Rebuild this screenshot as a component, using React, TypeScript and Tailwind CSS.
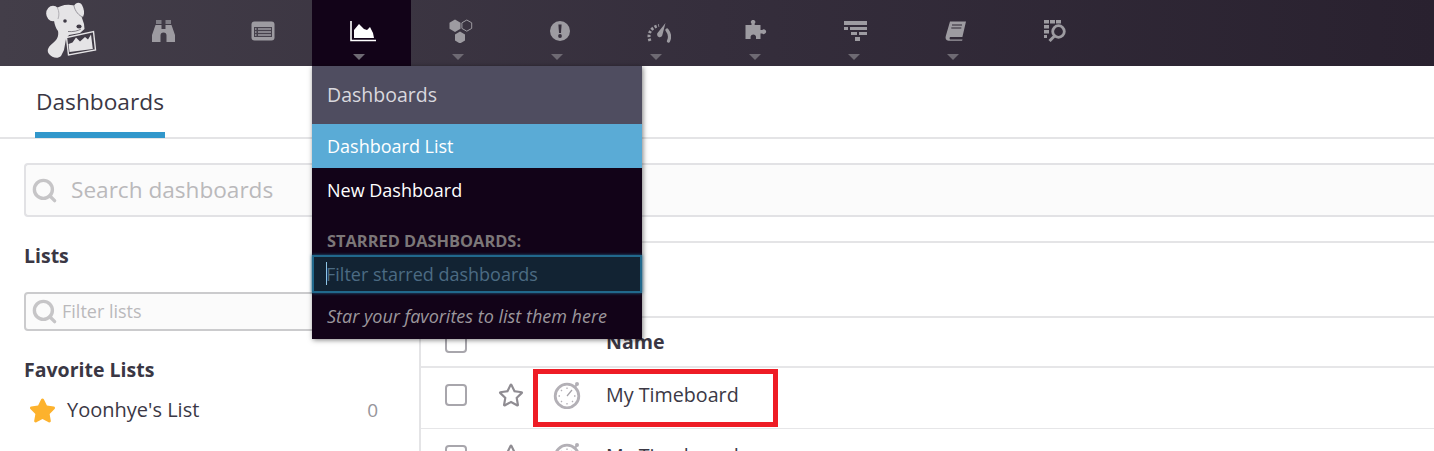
import { Search } from 'lucide-react';
import { FaStar, FaRegStar } from 'react-icons/fa';

const G = '#9d9ba1';

function DogLogo() {
    return (
        <svg width="80" height="66" viewBox="0 0 80 66" className="absolute left-[30px] top-0">
            <g fill="#e5e4e6">
                <path d="M24 10C30 5 40 3 47 7L51 15 54 24 54.500 29 50 33 39 35 36 39 34 50 31 56C28 59 22 58 19 54 16 50 19 46 23 43 27 40 29 36 28 31 24 26 23 17 24 10z" />
                <ellipse cx="23" cy="13.500" rx="6.800" ry="7.800" />
                <path d="M44 6C46 2 50 2 52 5 54 9 55 13 53 17 49 16 45 11 44 6z" />
            </g>
            <path d="M27.500 8C29 11 29.500 15 28 19" stroke="#a9a7ad" strokeWidth="0.900" fill="none" />
            <path d="M44 6C45 11 49 16 53 17" stroke="#8d8a92" strokeWidth="0.900" fill="none" />
            <circle cx="35" cy="21" r="1.800" fill="#3f3a45" />
            <ellipse cx="49" cy="26.500" rx="2.600" ry="2" fill="#3f3a45" />
            <path d="M38 31.500C43 32 48 31 51 29" stroke="#77747c" strokeWidth="0.900" fill="none" />
            <path d="M36.500 37.500l27-6 2 18.500-27 5z" fill="#403b46" stroke="#e5e4e6" strokeWidth="1.400" />
            <path d="M39.500 52l-1-8 4-1.500 3.500-5 4 4 5-4.500 3 2.500 3-5 1.800 14.500z" fill="#e5e4e6" />
        </svg>
    );
}

function BinocularsIcon() {
    return (
        <svg width="23" height="22" viewBox="0 0 23 22">
            <path d="M4 0h5.500v4H4zM13.500 0H19v4h-5.500z" fill="#7f7d85" />
            <path d="M3.500 5h6v4h4V5h6L23 15v7h-8.500v-6.500a3 3 0 0 0-6 0V22H0v-7z" fill={G} />
        </svg>
    );
}

function ListIcon() {
    return (
        <svg width="24" height="20" viewBox="0 0 24 20">
            <rect x="0.500" y="0.500" width="23" height="19" rx="3" fill={G} />
            <path d="M3 6h18v10H3z" fill="#46414c" />
            <path d="M7 8h13M7 11h13M7 14h13" stroke={G} strokeWidth="1.400" />
            <path d="M4 8h1.500M4 11h1.500M4 14h1.500" stroke={G} strokeWidth="1.400" />
        </svg>
    );
}

function AreaIcon() {
    return (
        <svg width="26" height="21" viewBox="0 0 26 21" className="ml-[2px]">
            <path d="M1 0v19.500h25" stroke="#fff" strokeWidth="1.600" fill="none" />
            <path d="M4 17V9l5-6 5 5 3 1 3-3 3 6 1 5z" fill="#fff" />
        </svg>
    );
}

function HexIcon() {
    return (
        <svg width="24" height="24" viewBox="0 0 24 24">
            <path d="M6 0.500l5.500 3.200v6L6 13 0.500 9.700v-6z" fill={G} />
            <path d="M17.800 1l4.900 2.800v5.600l-4.900 2.800-4.900-2.800V3.800z" fill="none" stroke={G} strokeWidth="1" />
            <path d="M11 12.500l5 3v6l-5 3-5-3v-6z" fill={G} />
        </svg>
    );
}

function AlertIcon() {
    return (
        <svg width="20" height="20" viewBox="0 0 20 20">
            <circle cx="10" cy="10" r="10" fill={G} />
            <path d="M8.400 3.500h3.200l-.6 8.500H9z" fill="#37303d" />
            <circle cx="10" cy="15" r="1.900" fill="#37303d" />
        </svg>
    );
}

function GaugeIcon() {
    return (
        <svg width="24" height="20" viewBox="0 0 24 20" className="mt-[4px]">
            <path d="M3 18C0 11 4 4 12 2.500" stroke={G} strokeWidth="3" strokeDasharray="2.400 1.600" fill="none" />
            <path d="M20 7c3 4 3 8 1.500 11" stroke={G} strokeWidth="3.200" strokeLinecap="round" fill="none" />
            <path d="M18.500 0l-3 11.500a2.700 2.700 0 1 1-4.600-2z" fill={G} />
        </svg>
    );
}

function PuzzleIcon() {
    return (
        <svg width="22" height="20" viewBox="0 0 22 20" className="-mt-[2px] mr-[3px]">
            <path d="M0.500 5h6V3.600a2.200 2.200 0 1 1 3.200 0V5h5.800v5h1.700a2.300 2.300 0 1 1 0 3.400h-1.700V19H11v-2.500a2.800 2.800 0 0 0-5.400 0V19H0.500z" fill={G} />
        </svg>
    );
}

function FilterIcon() {
    return (
        <svg width="24" height="20" viewBox="0 0 24 20" className="mr-[1px]">
            <g fill={G}>
                <rect x="0" y="0" width="23" height="4" />
                <rect x="0" y="6" width="4" height="3" />
                <rect x="6" y="6" width="17" height="3" />
                <rect x="7" y="11" width="6" height="3" />
                <rect x="15" y="11" width="8" height="3" />
                <rect x="11" y="16" width="5" height="4" />
            </g>
        </svg>
    );
}

function BookIcon() {
    return (
        <svg width="22" height="20" viewBox="0 0 22 20">
            <path d="M5 0.500h16l-3.600 15.500H5a2 2 0 0 0 0 2.500h12.500l-.4 1.200H3.500C1 19.500 0 17.500 0.800 15z" fill={G} />
            <path d="M7 4h10M6.300 7h10" stroke="#2f2835" strokeWidth="1.200" />
        </svg>
    );
}

function LogsIcon() {
    return (
        <svg width="22" height="22" viewBox="0 0 22 22">
            <g fill={G}>
                <rect x="0" y="0" width="5" height="3.500" />
                <rect x="6" y="0" width="5" height="3.500" />
                <rect x="12" y="0" width="5" height="3.500" />
                <rect x="0" y="5" width="5" height="3.500" />
                <rect x="0" y="10" width="5" height="3.500" />
                <rect x="0" y="15" width="3" height="3" />
            </g>
            <circle cx="14.500" cy="11.500" r="5.800" fill="none" stroke={G} strokeWidth="2.800" />
            <path d="M10.500 16L5.500 21" stroke={G} strokeWidth="3" />
        </svg>
    );
}

function TimerIcon() {
    return (
        <svg width="28" height="28" viewBox="0 0 28 28">
            <circle cx="14" cy="15" r="11.800" fill="#fff" stroke="#b3b0b6" strokeWidth="2.800" />
            <circle cx="24" cy="3" r="2" fill="#b3b0b6" />
            <path d="M21.500 7l2-3" stroke="#b3b0b6" strokeWidth="2" />
            <path d="M14 15l5-6" stroke="#a5a2a8" strokeWidth="1.200" />
            <path d="M14 6.500v1.500M14 22v1.500M5.500 15h1.500M21 15h1.500M8 9l1 1M19 20l1 1M8 21l1-1" stroke="#b3b0b6" strokeWidth="1.300" />
        </svg>
    );
}

function NavItem({ children, caret = true, active = false }: { children: React.ReactNode; caret?: boolean; active?: boolean }) {
    return (
        <div className={`relative flex h-[66px] w-[99px] shrink-0 justify-center pt-[19px] ${active ? 'bg-[#120318]' : ''}`}>
            <div className="flex h-[24px] items-center justify-center">{children}</div>
            {caret && (
                <span className="absolute left-[41px] top-[54px] h-0 w-0 border-x-[6px] border-t-[6px] border-x-transparent border-t-[#6e6a73]" />
            )}
        </div>
    );
}

function Checkbox() {
    return <div className="h-[22px] w-[22px] rounded-[4px] border-2 border-[#a8a6ac] bg-white" />;
}

function Row() {
    return (
        <div className="flex h-[61px] items-center border-b border-[#e6e6e8] pb-[7px] pl-[24px]">
            <Checkbox />
            <FaRegStar className="ml-[31px] text-[26px] text-[#8f8c92]" />
            <div className="ml-[29px]">
                <TimerIcon />
            </div>
            <span className="ml-[25px] text-[19.7px] text-[#3b3845]">My Timeboard</span>
        </div>
    );
}

export default function App() {
    return (
        <div className="relative h-[451px] w-[1434px] overflow-hidden bg-white font-['Open_Sans',sans-serif]">
            {/* Top nav */}
            <div className="relative flex h-[66px] bg-gradient-to-r from-[#433e49] via-[#352e3c] to-[#29212f] pl-[114px]">
                <DogLogo />
                <NavItem caret={false}>
                    <BinocularsIcon />
                </NavItem>
                <NavItem caret={false}>
                    <ListIcon />
                </NavItem>
                <NavItem active>
                    <AreaIcon />
                </NavItem>
                <NavItem>
                    <HexIcon />
                </NavItem>
                <NavItem>
                    <AlertIcon />
                </NavItem>
                <NavItem>
                    <GaugeIcon />
                </NavItem>
                <NavItem>
                    <PuzzleIcon />
                </NavItem>
                <NavItem>
                    <FilterIcon />
                </NavItem>
                <NavItem>
                    <BookIcon />
                </NavItem>
                <NavItem caret={false}>
                    <LogsIcon />
                </NavItem>
            </div>

            {/* Tabs */}
            <div className="flex h-[73px] items-start border-b-2 border-[#e4e4e6] pl-[35px]">
                <div className="flex h-[72px] w-[130px] items-center justify-center border-b-[6px] border-[#3197cb] pt-[6px]">
                    <span className="text-[22.7px] text-[#3a3744]">Dashboards</span>
                </div>
            </div>

            {/* Search */}
            <div className="pl-[24px] pt-[24px]">
                <div className="flex h-[54px] items-center rounded-l-[4px] border-2 border-r-0 border-[#e2e2e5] bg-[#fbfbfb] pl-[5px]">
                    <Search className="h-[27px] w-[27px] text-[#c6c5c7]" strokeWidth={3} />
                    <input
                        readOnly
                        placeholder="Search dashboards"
                        className="ml-[13px] flex-1 bg-transparent text-[22.6px] outline-none placeholder:text-[#bab9bb]"
                    />
                </div>
            </div>

            <div className="mt-[24px] flex">
                {/* Sidebar */}
                <div className="w-[419px] shrink-0 px-[24px]">
                    <h2 className="mt-[1px] text-[19.5px] font-bold leading-[28px] text-[#3a3744]">Lists</h2>
                    <div className="mt-[22px] flex h-[39px] items-center rounded-[4px] border-2 border-[#cbcbcd] bg-[#fbfbfb] pl-[5px]">
                        <Search className="h-[27px] w-[27px] text-[#c6c5c7]" strokeWidth={3} />
                        <input
                            readOnly
                            placeholder="Filter lists"
                            className="ml-[4px] flex-1 bg-transparent text-[18px] outline-none placeholder:text-[#bab9bb]"
                        />
                    </div>
                    <h2 className="mt-[25px] text-[19.5px] font-bold leading-[28px] text-[#3a3744]">Favorite Lists</h2>
                    <div className="mt-[11px] flex items-center pl-[5px]">
                        <FaStar className="text-[27px] text-[#fdb22d]" />
                        <span className="ml-[11px] flex-1 text-[20px] text-[#3b3845]">Yoonhye's List</span>
                        <span className="mr-[17px] text-[19px] text-[#97959b]">0</span>
                    </div>
                </div>

                {/* Table */}
                <div className="flex-1 border-l-2 border-t-2 border-[#e4e4e6]">
                    <div className="h-[75px] border-b-2 border-[#e4e4e6]" />
                    <div className="flex h-[50px] items-center border-b-2 border-[#e6e6e8] pl-[24px]">
                        <Checkbox />
                        <span className="ml-[139px] text-[19.6px] font-bold text-[#3a3744]">Name</span>
                    </div>
                    <Row />
                    <Row />
                </div>
            </div>

            {/* Red highlight box */}
            <div className="absolute left-[533px] top-[369px] h-[58px] w-[245px] border-[5px] border-[#ee1c25]" />

            {/* Dashboards dropdown */}
            <div className="absolute left-[312px] top-[66px] w-[330px] bg-[#120318] shadow-[1px_1px_5px_rgba(0,0,0,0.5)]">
                <div className="flex h-[58px] items-center bg-[#4f4d60] pl-[15px] text-[19.5px] text-[#d9d8de]">Dashboards</div>
                <div className="flex h-[44px] items-center bg-[#5aabd6] pl-[15px] pt-[1px] text-[18px] text-white">Dashboard List</div>
                <div className="flex h-[44px] items-center pl-[15px] text-[18px] text-white">New Dashboard</div>
                <div className="mt-[19px] pl-[15px] text-[16.4px] font-bold leading-[20px] text-[#7c7778]">STARRED DASHBOARDS:</div>
                <div className="relative mt-[4px] h-[38px] border-2 border-[#21688c] bg-[#122333] shadow-[0_0_3px_#21688c]">
                    <span className="absolute left-[12px] top-[5px] h-[23px] w-px bg-[#8fc6e6]" />
                    <input
                        readOnly
                        placeholder="Filter starred dashboards"
                        className="h-full w-full bg-transparent pl-[12px] text-[18px] outline-none placeholder:text-[#4c6b83]"
                    />
                </div>
                <div className="flex h-[46px] items-center pl-[15px] text-[18px] italic text-[#9c979c]">Star your favorites to list them here</div>
            </div>
        </div>
    );
}
